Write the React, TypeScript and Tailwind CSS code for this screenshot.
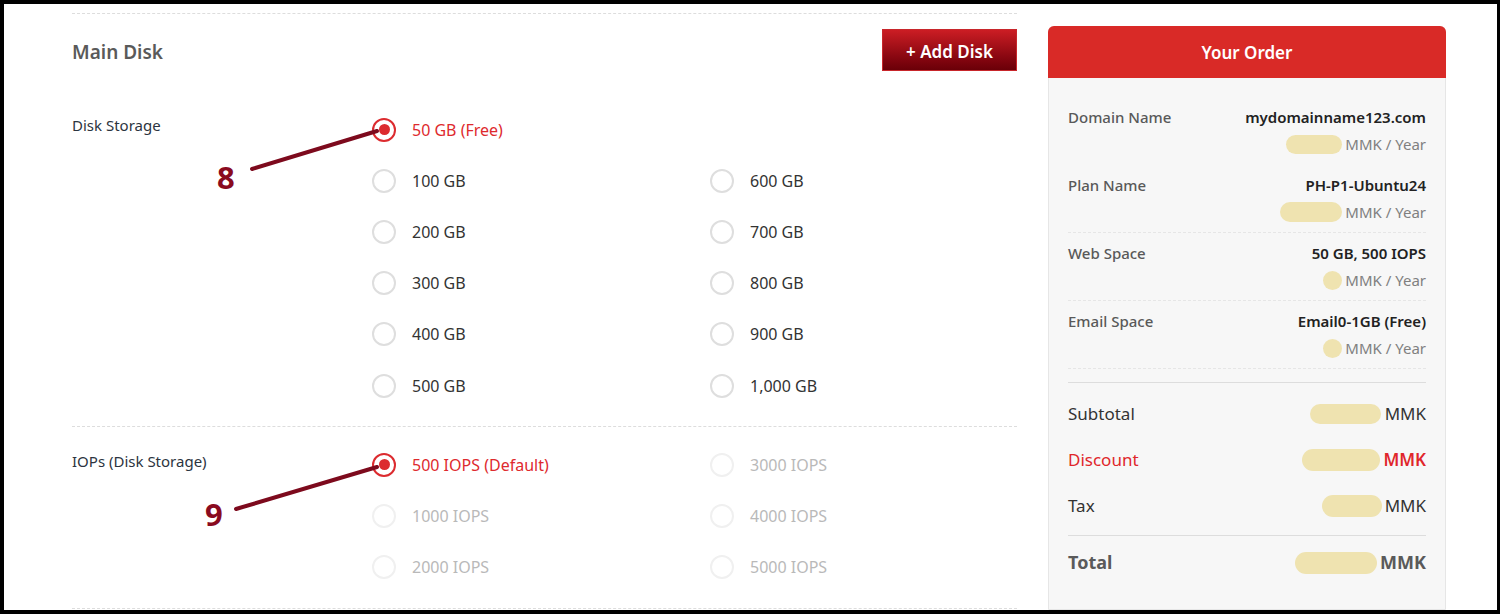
import clsx from 'clsx';

// Disk configuration step: disk size + IOPS radios on the left,
// running order summary on the right.

type Opt = { label: string; checked?: boolean; disabled?: boolean };

const diskOptions: (Opt | null)[] = [
  { label: '50 GB (Free)', checked: true },
  null,
  { label: '100 GB' },
  { label: '600 GB' },
  { label: '200 GB' },
  { label: '700 GB' },
  { label: '300 GB' },
  { label: '800 GB' },
  { label: '400 GB' },
  { label: '900 GB' },
  { label: '500 GB' },
  { label: '1,000 GB' },
];

const iopsOptions: Opt[] = [
  { label: '500 IOPS (Default)', checked: true },
  { label: '3000 IOPS', disabled: true },
  { label: '1000 IOPS', disabled: true },
  { label: '4000 IOPS', disabled: true },
  { label: '2000 IOPS', disabled: true },
  { label: '5000 IOPS', disabled: true },
];

type OrderLine = { label: string; value: string; blob: [number, number] };

const orderLines: OrderLine[] = [
  { label: 'Domain Name', value: 'mydomainname123.com', blob: [56, 19] },
  { label: 'Plan Name', value: 'PH-P1-Ubuntu24', blob: [62, 20] },
  { label: 'Web Space', value: '50 GB, 500 IOPS', blob: [19, 19] },
  { label: 'Email Space', value: 'Email0-1GB (Free)', blob: [19, 19] },
];

const font = { fontFamily: '"Noto Sans", "Open Sans", Arial, sans-serif' };

function Blob({ w, h }: { w: number; h: number }) {
  return (
    <span
      className="inline-block rounded-full bg-[#efe3b0]"
      style={{ width: w, height: h }}
    />
  );
}

function Radio({ opt, rowH }: { opt: Opt | null; rowH: string }) {
  if (!opt) return <div className={rowH} />;
  return (
    <label className={clsx('flex items-center gap-4', rowH)}>
      <span
        className={clsx(
          'flex h-6 w-6 items-center justify-center rounded-full border-2 bg-white',
          opt.checked
            ? 'border-[#dc2b2f]'
            : opt.disabled
              ? 'border-[#f0f0f0]'
              : 'border-[#dedede]'
        )}
      >
        {opt.checked && (
          <span className="h-[11px] w-[11px] rounded-full bg-[#dc2b2f]" />
        )}
      </span>
      <span
        className={clsx(
          'text-[16px] leading-[22px]',
          opt.checked
            ? 'text-[#de2a2e]'
            : opt.disabled
              ? 'text-[#b9b9b9]'
              : 'text-[#333333]'
        )}
      >
        {opt.label}
      </span>
    </label>
  );
}

export default function App() {
  return (
    <div
      className="relative h-[614px] w-[1500px] overflow-hidden bg-black pb-[4px] pl-[4px] pr-[3px] pt-[4px]"
      style={font}
    >
      <div className="flex h-full bg-white pl-[68px]">
        {/* left: disk options */}
        <div className="w-[945px] shrink-0">
          <div className="mt-[9px] border-t border-dashed border-[#dddddd]" />

          <div className="mt-[15px] flex h-[42px] items-center justify-between">
            <h2 className="pt-[4px] text-[19px] font-semibold text-[#5a5a5a]">
              Main Disk
            </h2>
            <button className="h-[42px] w-[135px] border border-[#c8262b] bg-gradient-to-b from-[#cc1d24] to-[#6a0008] pt-[3px] text-[17px] font-semibold text-white">
              + Add Disk
            </button>
          </div>

          <div className="flex border-b border-dashed border-[#dddddd] pb-[15px] pt-[33px]">
            <div className="w-[300px] pt-[10px] text-[15px] leading-[22px] text-[#2c3440]">
              Disk Storage
            </div>
            <div className="grid grid-cols-[338px_1fr]">
              {diskOptions.map((o, i) => (
                <Radio key={i} opt={o} rowH="h-[51.2px]" />
              ))}
            </div>
          </div>

          <div className="flex border-b border-dashed border-[#dddddd] pb-[16px] pt-[12px]">
            <div className="w-[300px] pt-[11px] text-[15px] leading-[22px] text-[#2c3440]">
              IOPs (Disk Storage)
            </div>
            <div className="grid grid-cols-[338px_1fr]">
              {iopsOptions.map((o, i) => (
                <Radio key={i} opt={o} rowH="h-[51px]" />
              ))}
            </div>
          </div>
        </div>

        {/* right: order summary */}
        <div className="ml-[31px] mt-[22px] w-[398px] shrink-0">
          <div className="h-full rounded-t-md border border-[#e6e6e6] bg-[#f7f7f7]">
            <div className="-mx-px -mt-px flex h-[52px] items-center justify-center rounded-t-md bg-[#d92a27] pt-[2px] text-[17px] font-semibold text-white">
              Your Order
            </div>
            <div className="px-[19px] pt-[19px]">
              {orderLines.map((l, i) => (
                <div
                  key={l.label}
                  className={clsx(
                    'border-b border-dashed pb-[10px] pt-[10px]',
                    i === 0 ? 'border-transparent' : 'border-[#e6e6e6]'
                  )}
                >
                  <div className="flex items-center justify-between leading-[20px]">
                    <span className="text-[15px] font-medium text-[#595959]">
                      {l.label}
                    </span>
                    <span className="text-[15px] font-semibold text-[#222222]">
                      {l.value}
                    </span>
                  </div>
                  <div className="mt-[7px] flex items-center justify-end gap-[3px] text-[15px] leading-[20px] text-[#808080]">
                    <Blob w={l.blob[0]} h={l.blob[1]} />
                    <span>MMK / Year</span>
                  </div>
                </div>
              ))}

              <div className="mt-[13px] border-t border-[#dddddd] pb-[6px] pt-[8px]">
                <div className="flex h-[46px] items-center justify-between text-[17px] text-[#333333]">
                  <span>Subtotal</span>
                  <span className="flex items-center gap-[4px]">
                    <Blob w={71} h={20} />
                    MMK
                  </span>
                </div>
                <div className="flex h-[46px] items-center justify-between text-[17px] text-[#e0262b]">
                  <span>Discount</span>
                  <span className="flex items-center gap-[3px] font-semibold">
                    <Blob w={78} h={22} />
                    MMK
                  </span>
                </div>
                <div className="flex h-[46px] items-center justify-between text-[17px] text-[#333333]">
                  <span>Tax</span>
                  <span className="flex items-center gap-[3px]">
                    <Blob w={60} h={22} />
                    MMK
                  </span>
                </div>
              </div>

              <div className="flex h-[54px] items-center justify-between border-t border-[#dddddd] text-[18px] font-bold text-[#5a5a5a]">
                <span>Total</span>
                <span className="flex items-center gap-[3px]">
                  <Blob w={82} h={22} />
                  MMK
                </span>
              </div>
            </div>
          </div>
        </div>
      </div>

      {/* numbered callouts pointing at the selected radios */}
      <svg
        className="pointer-events-none absolute left-0 top-0"
        width={1500}
        height={614}
      >
        <line x1={252} y1={169} x2={377} y2={131} stroke="#7d0a1d" strokeWidth={4} strokeLinecap="round" />
        <line x1={236} y1={509} x2={377} y2={467} stroke="#7d0a1d" strokeWidth={4} strokeLinecap="round" />
      </svg>
      <span className="absolute left-[217px] top-[162px] text-[31px] font-bold leading-none text-[#8a0b1f]">
        8
      </span>
      <span className="absolute left-[205px] top-[499px] text-[31px] font-bold leading-none text-[#8a0b1f]">
        9
      </span>
    </div>
  );
}
